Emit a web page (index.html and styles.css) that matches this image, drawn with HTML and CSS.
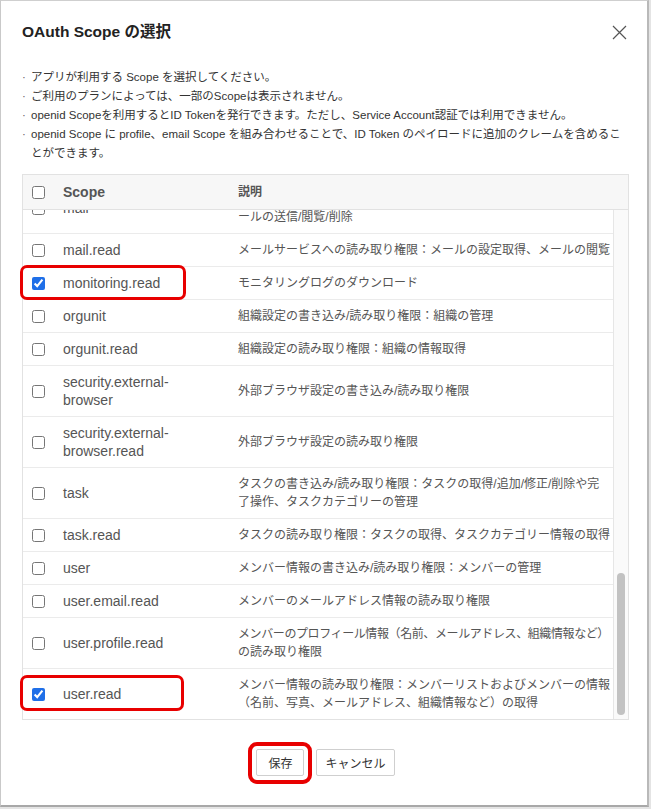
FILE: index.html
```html
<!DOCTYPE html>
<html lang="ja">
<head>
<meta charset="utf-8">
<title>OAuth Scope の選択</title>
<link rel="stylesheet" href="styles.css">
</head>
<body>
<div class="dialog">
  <header class="dialog-header">
    <h1 class="title">OAuth Scope の選択</h1>
    <button class="close" aria-label="閉じる">
      <svg width="15" height="15" viewBox="0 0 15 15"><path d="M1 1 L14 14 M14 1 L1 14" stroke="#555" stroke-width="1.2" fill="none"/></svg>
    </button>
  </header>

  <ul class="notes">
    <li>アプリが利用する Scope を選択してください。</li>
    <li>ご利用のプランによっては、一部のScopeは表示されません。</li>
    <li>openid Scopeを利用するとID Tokenを発行できます。ただし、Service Account認証では利用できません。</li>
    <li><span>openid Scope に profile、email Scope を組み合わせることで、ID Token のペイロードに追加のクレームを含めるこ<br>とができます。</span></li>
  </ul>

  <div class="scope-table">
    <div class="row head">
      <div class="cell-check"><input type="checkbox"></div>
      <div class="cell-scope">Scope</div>
      <div class="cell-desc">説明</div>
    </div>
    <div class="body">
      <div class="viewport">
        <div class="rows scrolled">
          <div class="row">
            <div class="cell-check"><input type="checkbox"></div>
            <div class="cell-scope">mail</div>
            <div class="cell-desc">メールサービスへの読み書き権限：メールの設定取得/更新、メ<br>ールの送信/閲覧/削除</div>
          </div>
          <div class="row">
            <div class="cell-check"><input type="checkbox"></div>
            <div class="cell-scope">mail.read</div>
            <div class="cell-desc">メールサービスへの読み取り権限：メールの設定取得、メールの閲覧</div>
          </div>
          <div class="row">
            <div class="cell-check"><input type="checkbox" checked></div>
            <div class="cell-scope">monitoring.read</div>
            <div class="cell-desc">モニタリングログのダウンロード</div>
          </div>
          <div class="row">
            <div class="cell-check"><input type="checkbox"></div>
            <div class="cell-scope">orgunit</div>
            <div class="cell-desc">組織設定の書き込み/読み取り権限：組織の管理</div>
          </div>
          <div class="row">
            <div class="cell-check"><input type="checkbox"></div>
            <div class="cell-scope">orgunit.read</div>
            <div class="cell-desc">組織設定の読み取り権限：組織の情報取得</div>
          </div>
          <div class="row">
            <div class="cell-check"><input type="checkbox"></div>
            <div class="cell-scope">security.external-browser</div>
            <div class="cell-desc">外部ブラウザ設定の書き込み/読み取り権限</div>
          </div>
          <div class="row">
            <div class="cell-check"><input type="checkbox"></div>
            <div class="cell-scope">security.external-browser.read</div>
            <div class="cell-desc">外部ブラウザ設定の読み取り権限</div>
          </div>
          <div class="row">
            <div class="cell-check"><input type="checkbox"></div>
            <div class="cell-scope">task</div>
            <div class="cell-desc">タスクの書き込み/読み取り権限：タスクの取得/追加/修正/削除や完<br>了操作、タスクカテゴリーの管理</div>
          </div>
          <div class="row">
            <div class="cell-check"><input type="checkbox"></div>
            <div class="cell-scope">task.read</div>
            <div class="cell-desc">タスクの読み取り権限：タスクの取得、タスクカテゴリー情報の取得</div>
          </div>
          <div class="row">
            <div class="cell-check"><input type="checkbox"></div>
            <div class="cell-scope">user</div>
            <div class="cell-desc">メンバー情報の書き込み/読み取り権限：メンバーの管理</div>
          </div>
          <div class="row">
            <div class="cell-check"><input type="checkbox"></div>
            <div class="cell-scope">user.email.read</div>
            <div class="cell-desc">メンバーのメールアドレス情報の読み取り権限</div>
          </div>
          <div class="row">
            <div class="cell-check"><input type="checkbox"></div>
            <div class="cell-scope">user.profile.read</div>
            <div class="cell-desc"><span class="tight">メンバーのプロフィール情報（名前、メールアドレス、組織情報など）</span><br>の読み取り権限</div>
          </div>
          <div class="row last">
            <div class="cell-check"><input type="checkbox" checked></div>
            <div class="cell-scope">user.read</div>
            <div class="cell-desc">メンバー情報の読み取り権限：メンバーリストおよびメンバーの情報<br>（名前、写真、メールアドレス、組織情報など）の取得</div>
          </div>
        </div>
      </div>
      <div class="scrollbar"><div class="thumb"></div></div>
    </div>
    <span class="mark mark-monitoring"></span>
    <span class="mark mark-user"></span>
  </div>

  <div class="actions">
    <div class="save-wrap">
      <button class="btn">保存</button>
      <span class="mark mark-save"></span>
    </div>
    <button class="btn">キャンセル</button>
  </div>
</div>
</body>
</html>
```

FILE: styles.css
```css
* { box-sizing: border-box; }

body {
  margin: 0;
  background: #e4e4e4;
  font-family: "Liberation Sans", "Noto Sans CJK JP", sans-serif;
  color: #333;
}

.dialog {
  width: 649px;
  height: 807px;
  background: #fff;
  border-left: 1px solid #c9c9c9;
  border-top: 1px solid #cfcfcf;
  border-right: 2px solid #b9b9b9;
  border-bottom: 2px solid #a8a8a8;
  padding: 19px 18px 0 21px;
}

.dialog-header {
  display: flex;
  align-items: center;
  justify-content: space-between;
  height: 24px;
}

.title {
  margin: 0;
  font-size: 15.5px;
  line-height: 24px;
  font-weight: bold;
  color: #222;
}

.close {
  border: 0;
  background: none;
  padding: 0;
  width: 15px;
  height: 15px;
  margin-right: 2px;
  display: flex;
}

.notes {
  list-style: none;
  margin: 24px 0 0;
  padding: 0;
  font-size: 11.5px;
  line-height: 19px;
  color: #333;
}

.notes li {
  display: flex;
  white-space: nowrap;
}

.notes li::before {
  content: "·";
  width: 9px;
  flex: none;
  color: #666;
}

.scope-table {
  position: relative;
  margin-top: 11px;
  border: 1px solid #e2e2e2;
}

.row {
  display: grid;
  grid-template-columns: 33px 175px 1fr;
  align-items: center;
  border-bottom: 1px solid #ebebeb;
}

.row.last { border-bottom: 0; }

.head {
  height: 35px;
  background: #f7f7f7;
  border-bottom: 1px solid #e2e2e2;
  font-weight: bold;
}

.cell-check {
  padding-left: 9px;
  display: flex;
  align-items: center;
}

.cell-check input {
  margin: 0;
  width: 13px;
  height: 13px;
  accent-color: #1f6fe8;
}

.cell-scope {
  padding: 7px 38px 7px 7px;
  font-size: 14px;
  line-height: 18px;
  color: #555;
}

.cell-desc {
  padding: 7px 0 7px 7px;
  font-size: 12px;
  line-height: 18px;
  color: #555;
  white-space: nowrap;
}

.tight { letter-spacing: -0.4px; }

.body {
  display: flex;
  height: 509px;
}

.viewport {
  flex: 1;
  overflow: hidden;
}

/* list scrolled to the bottom */
.rows.scrolled { margin-top: -27px; }

.scrollbar {
  width: 15px;
  flex: none;
  border-left: 1px solid #e6e6e6;
  background: #fafafa;
  display: flex;
  justify-content: center;
  padding-top: 363px;
}

.thumb {
  width: 8px;
  height: 142px;
  border-radius: 4px;
  background: #c2c2c2;
}

.actions {
  display: flex;
  justify-content: center;
  gap: 12px;
  margin-top: 29px;
}

.save-wrap { position: relative; display: flex; }

.btn {
  height: 27px;
  min-width: 48px;
  padding: 0 8px;
  font-family: inherit;
  font-size: 12px;
  color: #333;
  background: #fff;
  border: 1px solid #cfcfcf;
  border-radius: 2px;
}

.mark {
  position: absolute;
  border: 3px solid #e80000;
  border-radius: 7px;
  pointer-events: none;
}

.mark-monitoring { left: -3px; top: 90px; width: 166px; height: 35px; }
.mark-user { left: -3px; top: 500px; width: 164px; height: 36px; }
.mark-save { left: -8px; top: -7px; width: 64px; height: 42px; border-width: 4px; border-radius: 9px; }
```
